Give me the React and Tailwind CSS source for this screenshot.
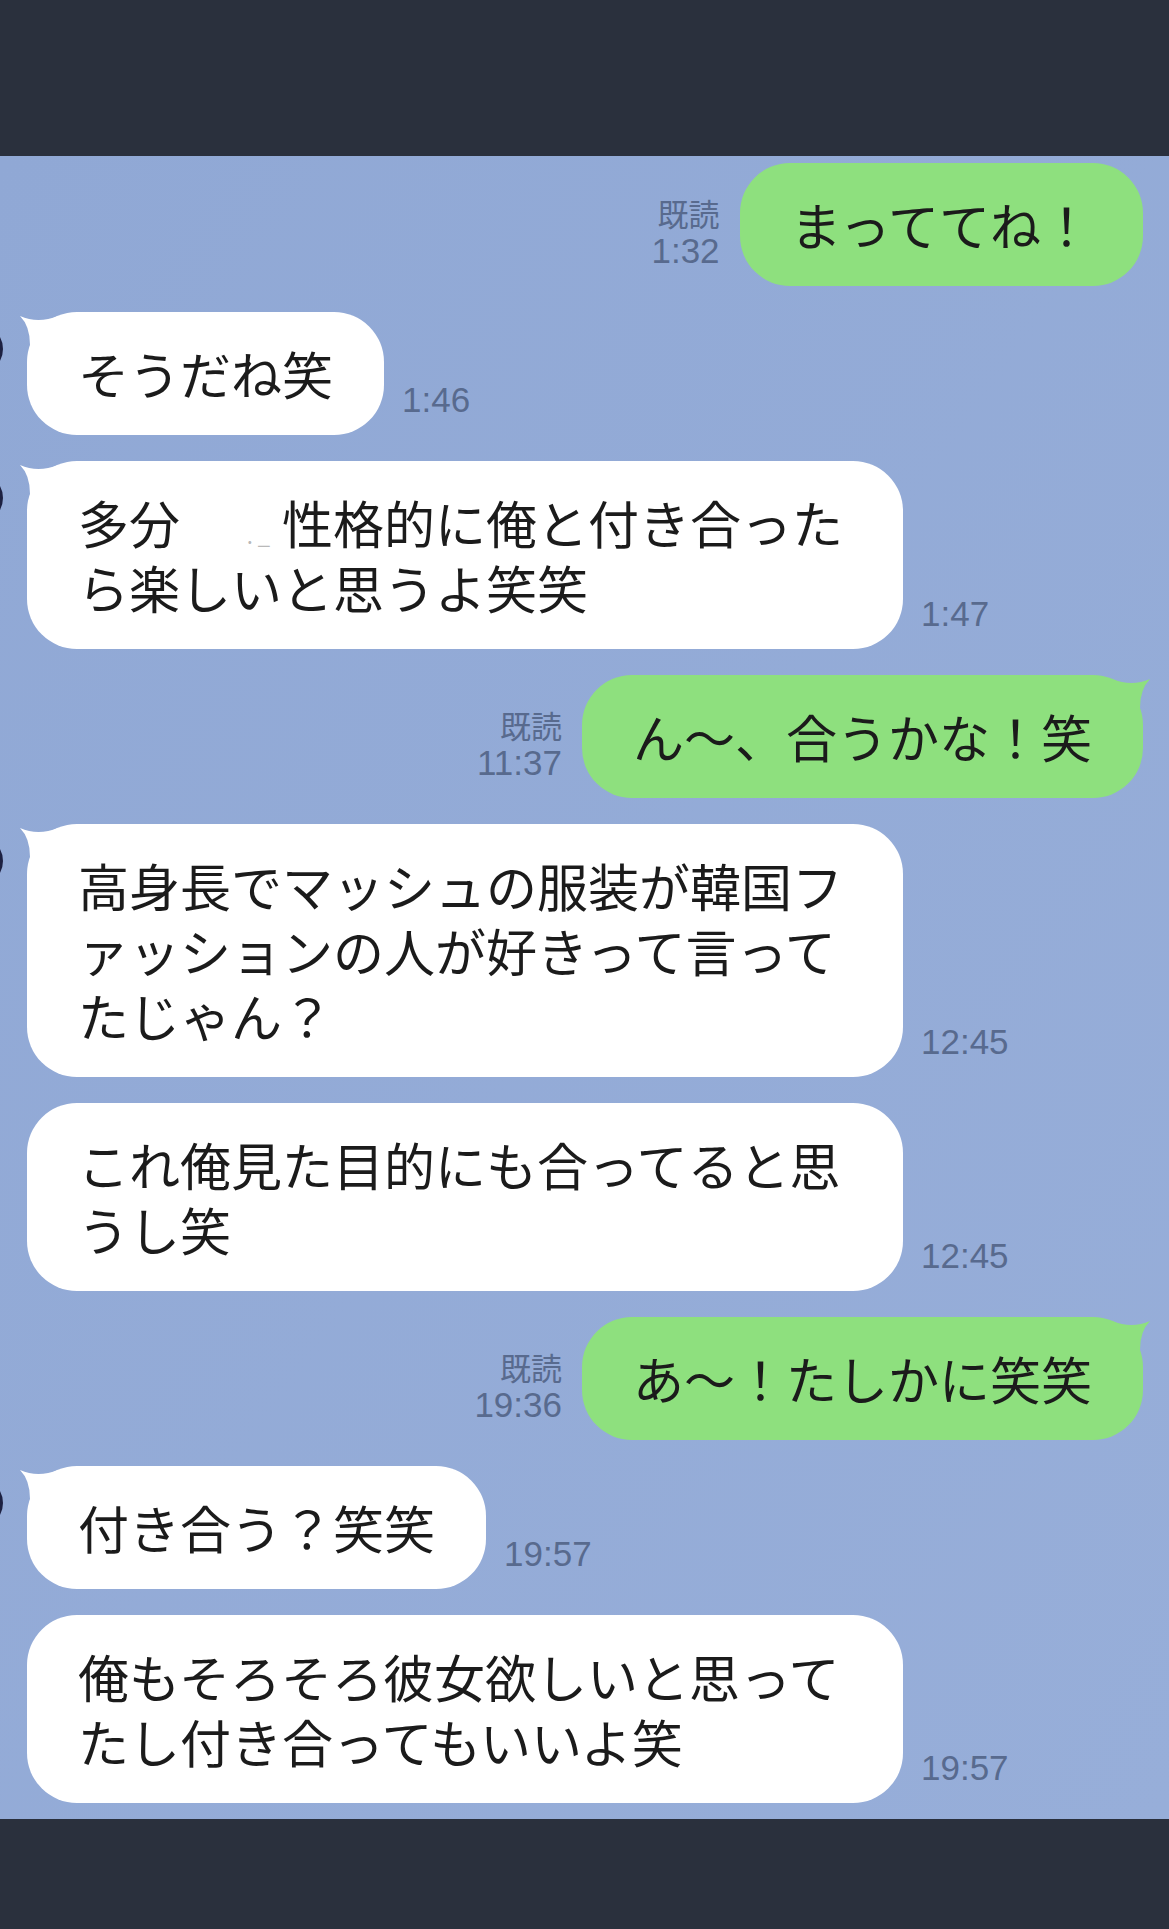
import React from 'react'

const messages = [
  { id: 1, me: true, lines: ['まっててね！'], time: '1:32' },
  { id: 2, lines: ['そうだね笑'], time: '1:46', tail: true },
  {
    id: 3,
    lines: [
      <>
        多分
        <span className="inline-block w-[102px] pr-[12px] text-right align-baseline text-[22px] leading-none text-[#b9b9b9]">. _</span>
        性格的に俺と付き合った
      </>,
      'ら楽しいと思うよ笑笑',
    ],
    time: '1:47',
    tail: true,
    wide: true,
  },
  { id: 4, me: true, lines: ['ん〜、合うかな！笑'], time: '11:37', tail: true },
  {
    id: 5,
    lines: ['高身長でマッシュの服装が韓国フ', 'ァッションの人が好きって言って', 'たじゃん？'],
    time: '12:45',
    tail: true,
    wide: true,
  },
  { id: 6, lines: ['これ俺見た目的にも合ってると思', 'うし笑'], time: '12:45', wide: true },
  { id: 7, me: true, lines: ['あ〜！たしかに笑笑'], time: '19:36', tail: true },
  { id: 8, lines: ['付き合う？笑笑'], time: '19:57', tail: true },
  { id: 9, lines: ['俺もそろそろ彼女欲しいと思って', 'たし付き合ってもいいよ笑'], time: '19:57', wide: true },
]

function Tail({ me }) {
  if (me) {
    return (
      <svg className="absolute right-[-9px] top-0 h-[50px] w-[50px]" viewBox="0 0 50 50">
        <path d="M48 4 Q30 12 10 4 L10 40 L38 40 L38 33 Q38 14 48 4 Z" fill="#8ee07e" />
      </svg>
    )
  }
  return (
    <svg className="absolute left-[-9px] top-0 h-[50px] w-[50px]" viewBox="0 0 50 50">
      <path d="M2 4 Q20 12 40 4 L40 40 L12 40 L12 33 Q12 14 2 4 Z" fill="#ffffff" />
    </svg>
  )
}

function Bubble({ msg }) {
  return (
    <div
      className={`relative rounded-[50px] px-[51px] py-[29px] text-[51px] leading-[65px] text-[#1b1b1b] ${
        msg.me ? 'bg-[#8ee07e]' : 'bg-white'
      } ${msg.wide ? 'w-[876px]' : ''}`}
    >
      {msg.tail && <Tail me={msg.me} />}
      <div className="relative">
        {msg.lines.map((line, i) => (
          <div key={i} className="h-[65px] whitespace-nowrap">
            {line}
          </div>
        ))}
      </div>
    </div>
  )
}

function Row({ msg }) {
  if (msg.me) {
    return (
      <div className="flex items-end justify-end pr-[26px]">
        <div className="mr-[20px] flex flex-col items-end pb-[15px] text-[#586a8e]">
          <span className="text-[31px] leading-[36px]">既読</span>
          <span className="font-['Liberation_Sans',sans-serif] text-[35px] leading-[40px]">{msg.time}</span>
        </div>
        <Bubble msg={msg} />
      </div>
    )
  }
  return (
    <div className="relative flex items-end pl-[27px]">
      {msg.tail && (
        <span className="absolute left-[-57px] top-[12px] h-[50px] w-[60px] rounded-full border-[3px] border-[#1d2142]" />
      )}
      <Bubble msg={msg} />
      <span className="ml-[18px] pb-[15px] font-['Liberation_Sans',sans-serif] text-[35px] leading-[40px] text-[#586a8e]">
        {msg.time}
      </span>
    </div>
  )
}

export default function App() {
  return (
    <div className="flex h-[1929px] flex-col overflow-hidden bg-[#2a303d] font-['Noto_Sans_CJK_JP',sans-serif]">
      <div className="h-[156px] shrink-0" />
      <div className="flex flex-col gap-[26px] bg-linear-to-br from-[#90a8d5] to-[#97aed9] pb-[16px] pt-[7px]">
        {messages.map(msg => (
          <Row key={msg.id} msg={msg} />
        ))}
      </div>
      <div className="flex-1" />
    </div>
  )
}
